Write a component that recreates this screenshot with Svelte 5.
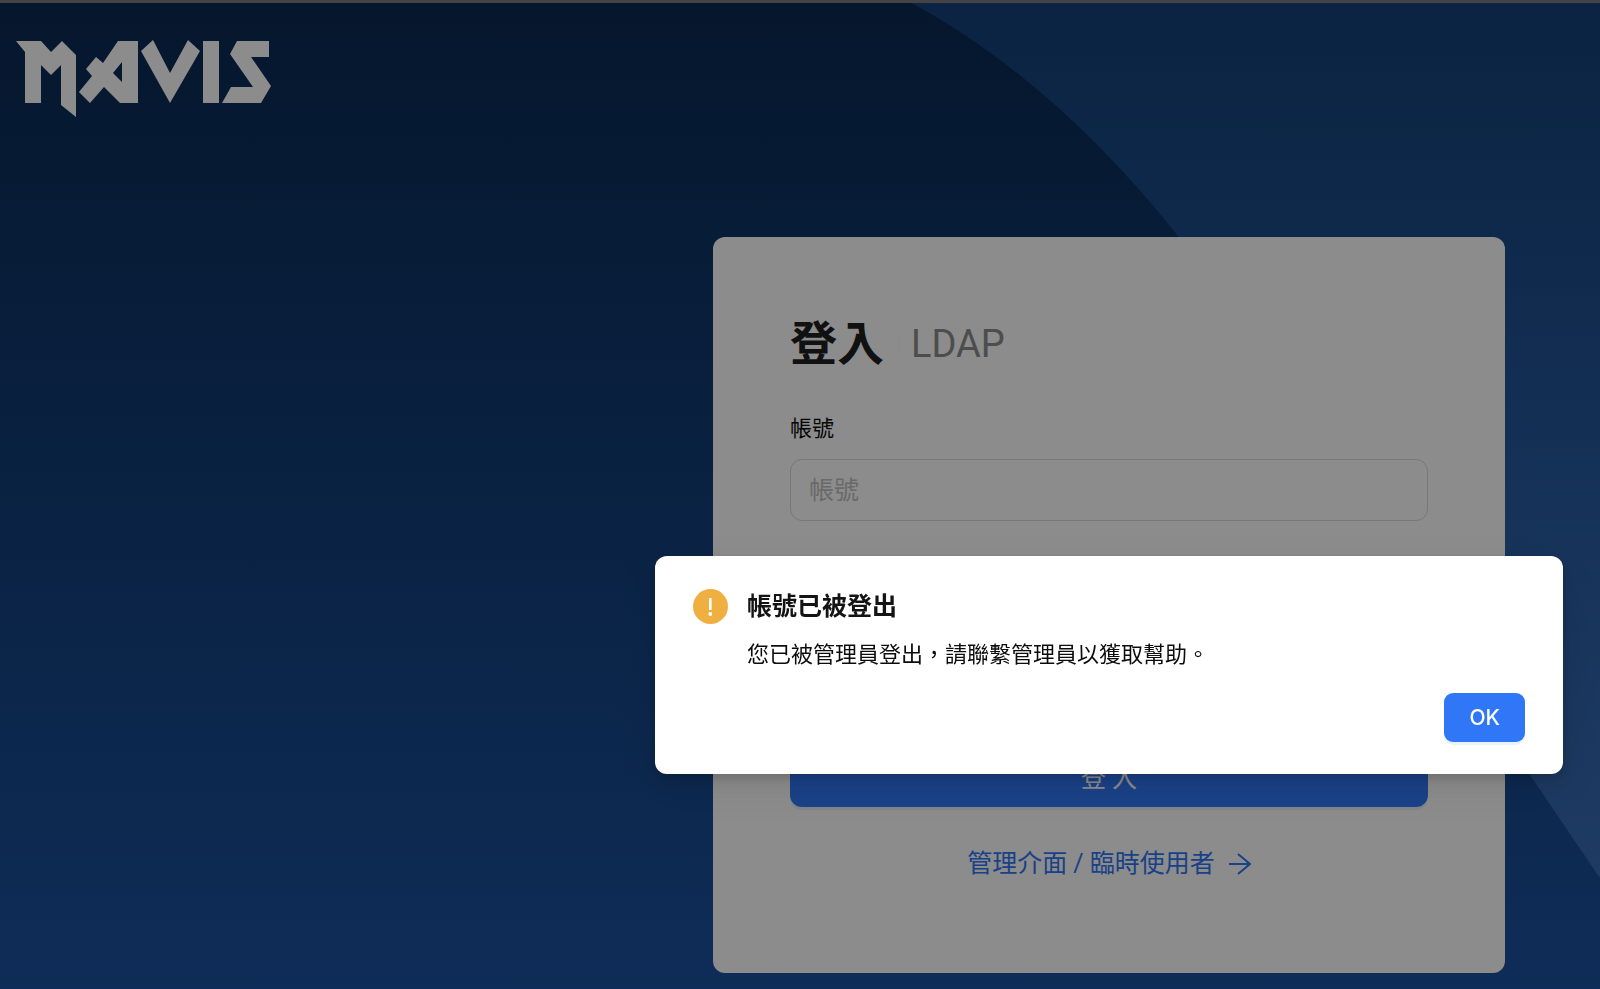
<script>
  let account = $state('');
  let password = $state('');
  let dialogOpen = $state(true);

  const closeDialog = () => { dialogOpen = false; };
  const submit = (event) => { event.preventDefault(); };
</script>

<div class="page">
  <svg class="backdrop" viewBox="0 0 1600 989" preserveAspectRatio="none" aria-hidden="true">
    <defs>
      <linearGradient id="sweep" x1="0" y1="0" x2="0" y2="1">
        <stop offset="0" stop-color="#16417a" />
        <stop offset="0.3" stop-color="#1c4d8b" />
        <stop offset="0.6" stop-color="#295da4" />
        <stop offset="1" stop-color="#386cb6" />
      </linearGradient>
    </defs>
    <path
      fill="url(#sweep)"
      d="M906 0 C1010 55 1100 138 1178 236 C1310 425 1425 617 1530 775 L1600 878 V0 Z"
    />
  </svg>

  <div class="top-strip"></div>

  <!-- Header -->
  <header class="header">
    <svg class="logo" viewBox="0 0 256 77" role="img" aria-label="MAVIS">
      <g fill="#fff" fill-rule="evenodd">
        <path d="M0 1H25L35 12L46 1L60 15V77L45 65V25L35 35L25 25V63H9V12Z" />
        <path d="M102 1H122V63H104L88 47L74 63L63 52L76 36L70 29L80 17L87 23ZM106 22L97 33L106 42Z" />
        <path d="M125 11L137 0L154 33L172 0L184 11L154 63Z" />
        <path d="M187 1H203V63H187Z" />
        <path d="M221 1H253V17H235L255 46L245 63H206L215 47H237L214 14Z" />
      </g>
    </svg>
  </header>

  <!-- Login card -->
  <main class="main">
    <section class="card">
      <div class="card-head">
        <h1 class="title">登入</h1>
        <span class="divider"></span>
        <span class="method">LDAP</span>
      </div>
      <form class="form" onsubmit={submit}>
        <label class="label" for="account">帳號</label>
        <input id="account" class="field" type="text" placeholder="帳號" bind:value={account} />
        <input class="field password" type="password" aria-label="密碼" bind:value={password} />
        <button class="submit" type="submit">登 入</button>
      </form>
      <a class="admin-link" href="#admin">
        <span>管理介面 / 臨時使用者</span>
        <svg class="arrow" viewBox="0 0 22 22" aria-hidden="true">
          <path d="M0 11H21M9 1L21 11L9 21" fill="none" stroke="currentColor" stroke-width="2" />
        </svg>
      </a>
    </section>
  </main>
</div>

<!-- Logged out dialog -->
{#if dialogOpen}
  <div class="mask">
    <div class="dialog" role="alertdialog" aria-labelledby="dialog-title" aria-describedby="dialog-text">
      <div class="dialog-body">
        <svg class="warn" viewBox="0 0 35 35" aria-hidden="true">
          <circle cx="17.5" cy="17.5" r="17.5" fill="#f0af41" />
          <path d="M16 9H18.6V21H16Z" fill="#fff" />
          <circle cx="17.3" cy="25" r="1.9" fill="#fff" />
        </svg>
        <div>
          <h2 id="dialog-title" class="dialog-title">帳號已被登出</h2>
          <p id="dialog-text" class="dialog-text">您已被管理員登出，請聯繫管理員以獲取幫助。</p>
        </div>
      </div>
      <div class="dialog-actions">
        <button class="ok" type="button" onclick={closeDialog}>OK</button>
      </div>
    </div>
  </div>
{/if}

<style>
  :global(body) {
    margin: 0;
    font-family: Roboto, "Noto Sans CJK TC", sans-serif;
  }

  .page {
    position: relative;
    box-sizing: border-box;
    min-height: 100vh;
    padding-bottom: 16px;
    background: linear-gradient(#0a2a52, #1b52a0);
  }

  .backdrop {
    position: absolute;
    inset: 0;
    width: 100%;
    height: 100%;
  }

  .top-strip {
    position: relative;
    height: 3px;
    background: #7c7c7c;
  }

  .header {
    position: relative;
    padding: 37px 16px 0;
  }

  .logo {
    display: block;
    width: 256px;
    height: 77px;
  }

  .main {
    position: relative;
    display: flex;
    justify-content: flex-end;
    padding: 120px 95px 0 16px;
  }

  /* Card */
  .card {
    box-sizing: border-box;
    width: 100%;
    max-width: 792px;
    padding: 77px 77px 89px;
    background: #fff;
    border-radius: 12px;
  }

  .card-head {
    display: flex;
    align-items: center;
    height: 60px;
  }

  .title {
    margin: 0;
    font-size: 47px;
    line-height: 60px;
    font-weight: 700;
    color: #1f1f1f;
  }

  .divider {
    width: 1px;
    height: 20px;
    margin: 0 12px 0 14px;
    background: #f8f8f8;
  }

  .method {
    font-size: 38px;
    line-height: 60px;
    color: #8c8c8c;
  }

  .form {
    display: flex;
    flex-direction: column;
    margin-top: 38px;
  }

  .label {
    font-size: 22px;
    line-height: 34px;
    color: #0c0c0c;
  }

  .field {
    box-sizing: border-box;
    width: 100%;
    height: 62px;
    margin-top: 13px;
    padding: 0 18px;
    border: 1px solid #d9d9d9;
    border-radius: 12px;
    background: #fff;
    font-family: inherit;
    font-size: 25px;
    color: #1f1f1f;
  }

  .field::placeholder { color: #bfbfbf; opacity: 1; }

  .password { margin-top: 83px; }

  .submit {
    height: 62px;
    margin-top: 79px;
    border: none;
    border-radius: 12px;
    background: #3077f7;
    box-shadow: 0 3px 0 rgba(5, 145, 255, 0.1);
    font-family: inherit;
    font-size: 25px;
    color: #fff;
  }

  .admin-link {
    display: flex;
    align-items: center;
    justify-content: center;
    gap: 14px;
    margin-top: 37px;
    font-size: 25px;
    line-height: 40px;
    color: #3077f7;
    text-decoration: none;
  }

  .arrow {
    width: 22px;
    height: 22px;
  }

  /* Dialog */
  .mask {
    position: fixed;
    inset: 0;
    display: flex;
    align-items: flex-start;
    justify-content: flex-end;
    padding: 556px 37px 0 16px;
    background: rgba(0, 0, 0, 0.45);
  }

  .dialog {
    box-sizing: border-box;
    width: 100%;
    max-width: 908px;
    padding: 32px 38px;
    background: #fff;
    border-radius: 12px;
    box-shadow: 0 9px 24px rgba(0, 0, 0, 0.08), 0 4px 9px rgba(0, 0, 0, 0.12), 0 14px 42px 12px rgba(0, 0, 0, 0.05);
  }

  .dialog-body {
    display: flex;
    align-items: flex-start;
    gap: 19px;
  }

  .warn {
    flex-shrink: 0;
    width: 35px;
    height: 35px;
    margin-top: 1px;
  }

  .dialog-title {
    margin: 0;
    font-size: 25px;
    line-height: 38px;
    font-weight: 700;
    color: #141414;
  }

  .dialog-text {
    margin: 12px 0 0;
    font-size: 22px;
    line-height: 34px;
    color: #0c0c0c;
  }

  .dialog-actions {
    display: flex;
    justify-content: flex-end;
    margin-top: 21px;
  }

  .ok {
    height: 49px;
    padding: 0 25px;
    border: none;
    border-radius: 9px;
    background: #3077f7;
    box-shadow: 0 3px 0 rgba(5, 145, 255, 0.1);
    font-family: Inter, sans-serif;
    font-size: 21px;
    font-weight: 500;
    color: #fff;
  }
</style>
